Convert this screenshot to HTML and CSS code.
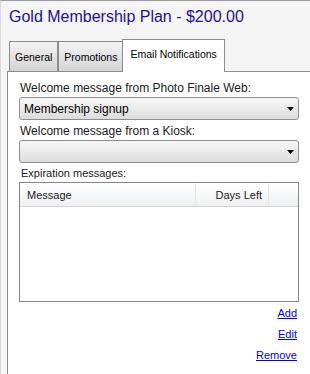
FILE: index.html
```html
<!DOCTYPE html>
<html>
<head>
<meta charset="utf-8">
<link rel="stylesheet" href="styles.css">
</head>
<body>
<div class="window">
  <h1 class="title">Gold Membership Plan - $200.00</h1>
  <div class="tabs">
    <div class="tab">General</div>
    <div class="tab">Promotions</div>
    <div class="tab active">Email Notifications</div>
  </div>
  <div class="panel">
    <div class="label">Welcome message from Photo Finale Web:</div>
    <div class="select">
      <span class="value">Membership signup</span>
      <svg class="arrow" width="7" height="4" viewBox="0 0 7 4"><path d="M0 0H7L3.5 4Z" fill="#000"/></svg>
    </div>
    <div class="label">Welcome message from a Kiosk:</div>
    <div class="select">
      <span class="value"></span>
      <svg class="arrow" width="7" height="4" viewBox="0 0 7 4"><path d="M0 0H7L3.5 4Z" fill="#000"/></svg>
    </div>
    <div class="label small">Expiration messages:</div>
    <div class="list">
      <div class="list-head">
        <div class="col col-msg">Message</div>
        <div class="col col-days">Days Left</div>
        <div class="col col-fill"></div>
      </div>
    </div>
    <div class="links">
      <a href="#">Add</a>
      <a href="#">Edit</a>
      <a href="#">Remove</a>
    </div>
  </div>
</div>
</body>
</html>
```
FILE: styles.css
```css
html, body {
  margin: 0;
  padding: 0;
}
body {
  background: #f5f5f5;
  font-family: "Liberation Sans", Arial, sans-serif;
  color: #000;
}
.window {
  height: 374px;
  box-sizing: border-box;
  border-top: 1px solid #9a9a9a;
  border-left: 1px solid #d9d9d9;
  overflow: hidden;
  display: flex;
  flex-direction: column;
}
.title {
  margin: 0;
  padding: 7px 0 0 8px;
  font-size: 16px;
  font-weight: normal;
  line-height: 18px;
  color: #1f0f9a;
}
.tabs {
  display: flex;
  align-items: flex-end;
  margin-top: 13px;
  padding-left: 8px;
  height: 32px;
  position: relative;
  z-index: 1;
}
.tab {
  box-sizing: border-box;
  height: 30px;
  border: 1px solid #8c8c8c;
  border-bottom: none;
  background: linear-gradient(#f3f3f3, #d4d4d4);
  font-size: 10.5px;
  line-height: 28px;
  padding: 1px 5px 0 5px;
  white-space: nowrap;
}
.tab.active {
  height: 33px;
  margin-bottom: -1px;
  margin-left: -1px;
  background: #fff;
  line-height: 22px;
  padding: 3px 7px 7px 7px;
}
.panel {
  flex: 1;
  margin-left: 6px;
  border-top: 1px solid #8b8d94;
  border-left: 1px solid #8b8d94;
  background: #fff;
  padding: 9px 0 0 11px;
  width: 280px;
  padding-right: 20px;
}
.label {
  font-size: 12px;
  line-height: 14px;
  padding-left: 1px;
  color: #1a1a1a;
}
.label.small {
  font-size: 11px;
  line-height: 13px;
  padding-left: 2px;
  margin-top: 1px;
}
.select {
  box-sizing: border-box;
  height: 23px;
  margin: 2px 0 4px 0;
  border: 1px solid #8e8e8e;
  border-radius: 3px;
  background: linear-gradient(#f7f7f7, #ebebeb 50%, #dcdcdc);
  display: flex;
  align-items: center;
  justify-content: space-between;
  padding: 0 4px 0 4px;
}
.value {
  font-size: 12px;
  line-height: 14px;
  padding-top: 1px;
}
.arrow {
  display: block;
  margin-top: 1px;
}
.list {
  box-sizing: border-box;
  height: 120px;
  margin-top: 2px;
  border: 1px solid #828790;
  background: #fff;
}
.list-head {
  display: flex;
  height: 24px;
  box-sizing: border-box;
  border-bottom: 1px solid #d5d5d5;
  background: linear-gradient(#ffffff, #f7f8f9 50%, #eeeff1);
  font-size: 11px;
}
.col {
  box-sizing: border-box;
  line-height: 23px;
  padding-top: 1px;
  color: #1a1a1a;
}
.col-msg {
  width: 176px;
  padding-left: 7px;
  border-right: 1px solid #e2e3e5;
}
.col-days {
  width: 73px;
  text-align: right;
  padding-right: 6px;
  border-right: 1px solid #e2e3e5;
}
.col-fill {
  flex: 1;
}
.links {
  display: flex;
  flex-direction: column;
  align-items: flex-end;
  padding-right: 2px;
  margin-top: 1px;
}
.links a {
  font-size: 11px;
  line-height: 21px;
  color: #0000ff;
  text-decoration: underline;
}
```
